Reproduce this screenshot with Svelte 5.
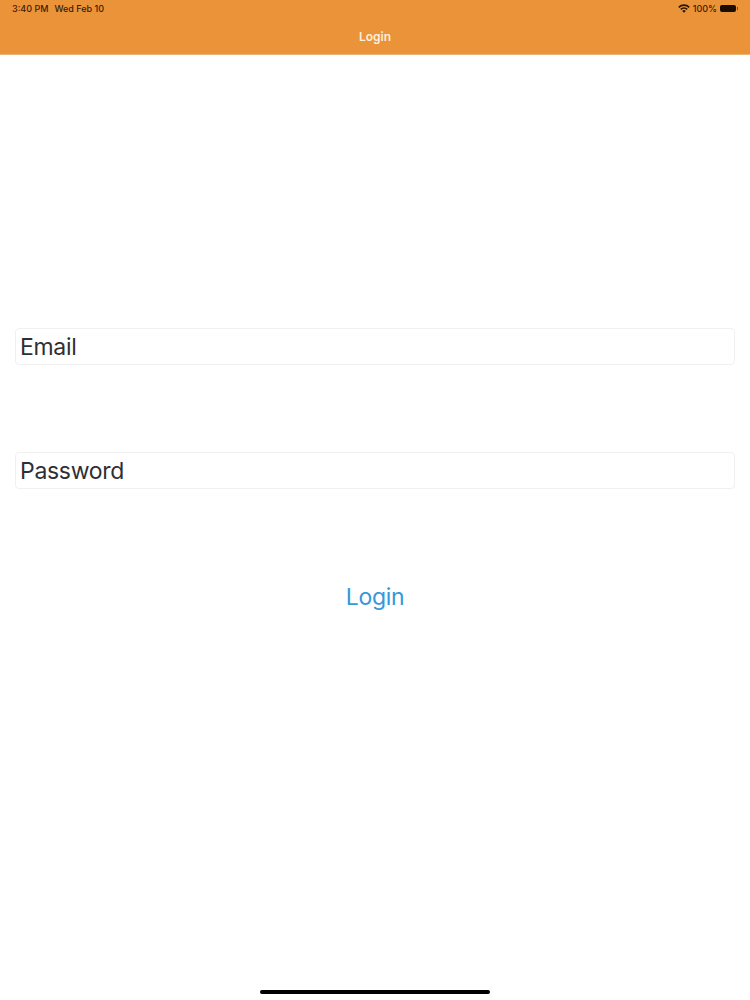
<script lang="ts">
    let email = $state("");
    let password = $state("");
</script>

<div class="page">
    <header class="navbar">
        <div class="status">
            <div class="status-left">
                <span>3:40 PM</span>
                <span>Wed Feb 10</span>
            </div>
            <div class="status-right">
                <svg class="wifi" width="12" height="9" viewBox="0 0 12 9" aria-hidden="true">
                    <path d="M6 8.8 4.2 6.9a2.6 2.6 0 0 1 3.6 0z" />
                    <path d="M3.3 6 2.2 4.8a5.4 5.4 0 0 1 7.6 0L8.7 6a3.9 3.9 0 0 0-5.4 0z" />
                    <path d="M1.3 3.9.2 2.7a8.3 8.3 0 0 1 11.6 0l-1.1 1.2a6.7 6.7 0 0 0-9.4 0z" />
                </svg>
                <span>100%</span>
                <div class="battery">
                    <div class="battery-body"></div>
                    <div class="battery-tip"></div>
                </div>
            </div>
        </div>
        <h1 class="title">Login</h1>
    </header>

    <main class="form">
        <input class="field" type="email" placeholder="Email" bind:value={email} />
        <input class="field" type="password" placeholder="Password" bind:value={password} />
        <button class="login">Login</button>
    </main>

    <div class="home-bar"><div class="home-indicator"></div></div>
</div>

<style>
    :global(body) {
        background: #fff;
    }

    .page {
        display: flex;
        flex-direction: column;
        height: 1000px;
        font-family: "Inter", "Liberation Sans", sans-serif;
    }

    .navbar {
        flex-shrink: 0;
        height: 55px;
        box-sizing: border-box;
        padding: 3px 12px 0;
        background: #ea9339;
        border-bottom: 1px solid #e8b577;
    }

    .status {
        display: flex;
        justify-content: space-between;
        align-items: center;
        height: 10px;
        font-size: 9px;
        font-weight: 500;
        color: #3a2008;
    }

    .status-left {
        display: flex;
        gap: 6px;
    }

    .status-right {
        display: flex;
        align-items: center;
        gap: 3px;
    }

    .wifi {
        fill: #2a1605;
    }

    .battery {
        display: flex;
        align-items: center;
        gap: 1px;
    }

    .battery-body {
        width: 16px;
        height: 7px;
        background: #1a0e03;
        border-radius: 2px;
    }

    .battery-tip {
        width: 1px;
        height: 3px;
        background: #7a4a1c;
    }

    .title {
        margin: 16px 0 0;
        font-size: 12px;
        line-height: 16px;
        font-weight: 600;
        text-align: center;
        color: #fdefd8;
    }

    .form {
        flex: 1;
        display: flex;
        flex-direction: column;
        align-items: stretch;
        padding: 273px 15px 0;
    }

    .field {
        box-sizing: border-box;
        height: 37px;
        padding: 0 5px 0 4px;
        margin-bottom: 87px;
        border: 1px solid #f0f0f0;
        border-radius: 4px;
        background: #fff;
        font-family: inherit;
        font-size: 23px;
        letter-spacing: -0.3px;
        color: #2f2f33;
        outline: none;
    }

    .field::placeholder {
        color: #2f2f33;
        opacity: 1;
    }

    .login {
        align-self: center;
        margin-top: 6px;
        padding: 0;
        border: none;
        background: transparent;
        font-family: inherit;
        font-size: 23px;
        letter-spacing: -0.3px;
        line-height: 30px;
        color: #3498db;
        cursor: pointer;
    }

    .home-bar {
        flex-shrink: 0;
        display: flex;
        justify-content: center;
        padding-bottom: 6px;
    }

    .home-indicator {
        width: 230px;
        height: 4px;
        border-radius: 2px;
        background: #000;
    }
</style>
